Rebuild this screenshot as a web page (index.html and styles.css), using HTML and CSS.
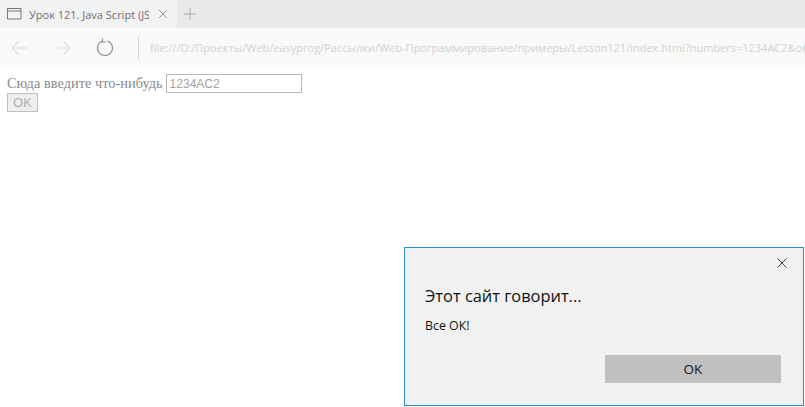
FILE: index.html
```html
<!DOCTYPE html>
<html lang="ru">
<head>
<meta charset="utf-8">
<title>Урок 121</title>
<link rel="stylesheet" href="styles.css">
</head>
<body>
<div class="tabbar">
  <div class="tab">
    <svg class="tab-icon" width="15" height="12" viewBox="0 0 15 12"><path d="M.5.5h13.500v10.500H.5zM.5 3h13.500" fill="none" stroke="#777"/></svg>
    <span class="tab-title">Урок 121. Java Script (JS</span>
    <svg class="tab-close" width="10" height="10" viewBox="0 0 10 10"><path d="M1 1l8 8M9 1l-8 8" stroke="#999" fill="none"/></svg>
  </div>
  <svg class="tab-new" width="12" height="12" viewBox="0 0 12 12"><path d="M6 0v12M0 6h12" stroke="#aaa" fill="none"/></svg>
</div>
<div class="toolbar">
  <svg class="nav nav-back" width="18" height="14" viewBox="0 0 18 14"><path d="M17 7H1M7.500 .5L1 7l6.500 6.500" stroke="#dedede" fill="none" stroke-width="1.200"/></svg>
  <svg class="nav nav-forward" width="18" height="14" viewBox="0 0 18 14"><path d="M1 7h16M10.500 .5L17 7l-6.500 6.500" stroke="#dedede" fill="none" stroke-width="1.200"/></svg>
  <svg class="nav nav-reload" width="18" height="19" viewBox="0 0 18 19"><path d="M11.500 3A7.500 7.500 0 1 1 6.500 3M6.500 .5V4H10" stroke="#909090" fill="none" stroke-width="1.100"/></svg>
  <div class="divider"></div>
  <div class="url">file:///D:/Проекты/Web/easyprog/Рассылки/Web-Программирование/примеры/Lesson121/index.html?numbers=1234AC2&amp;ok</div>
</div>
<main class="page">
  <div class="form-row">
    <label class="form-label" for="numbers">Сюда введите что-нибудь</label>
    <input class="form-input" id="numbers" value="1234AC2">
  </div>
  <button class="form-button">OK</button>
</main>
<section class="dialog">
  <svg class="dialog-close" width="10" height="10" viewBox="0 0 10 10"><path d="M.5.5l9 9M9.500 .5l-9 9" stroke="#444" fill="none"/></svg>
  <h1 class="dialog-title">Этот сайт говорит...</h1>
  <p class="dialog-text">Все ОК!</p>
  <div class="dialog-actions"><button class="dialog-button">OK</button></div>
</section>
</body>
</html>
```
FILE: styles.css
```css
* { box-sizing: border-box; }
html, body { margin: 0; height: 100%; }
body { position: relative; width: 805px; height: 407px; overflow: hidden; background: #fff; font-family: "Open Sans", "Noto Sans", sans-serif; }

.tabbar { height: 28px; background: #e9e9e9; display: flex; align-items: center; }
.tab { width: 177px; height: 28px; background: #f2f2f2; display: flex; align-items: center; padding-left: 7px; }
.tab-icon { flex: none; }
.tab-title { margin-left: 7px; width: 120px; overflow: hidden; white-space: nowrap; font-size: 11px; color: #707070; }
.tab-close { margin-left: 9px; flex: none; }
.tab-new { margin-left: 7px; }

.toolbar { height: 39px; background: #f9f9f9; display: flex; align-items: center; overflow: hidden; }
.nav { flex: none; }
.nav-back { margin-left: 11px; }
.nav-forward { margin-left: 24px; }
.nav-reload { margin-left: 25px; }
.divider { flex: none; width: 1px; height: 22px; margin-left: 24px; background: #d4d4d4; }
.url { flex: none; margin-left: 11px; white-space: nowrap; font-size: 11px; color: #d2d2d2; }

.page { padding: 7px 7px 0; font-family: "Liberation Serif", serif; font-size: 14.400px; color: #8a8a8a; }
.form-row { display: flex; align-items: center; height: 19px; }
.form-label { white-space: nowrap; }
.form-input { width: 136px; height: 19px; margin-left: 3px; padding: 0 3px; border: 1px solid #b8b8b8; background: #fff; color: #a2a2a2; font: 12px "Liberation Sans", sans-serif; }
.form-button { display: block; width: 31px; height: 19px; margin-top: 0; padding: 0; border: 1px solid #c0c0c0; background: #eee; color: #b0b0b0; font: 13px "Liberation Sans", sans-serif; }

.dialog { position: absolute; left: 404px; top: 247px; width: 400px; height: 159px; padding: 0 22px 0 20px; background: #f1f1f1; border: 1px solid #2a8ae0; color: #111; }
.dialog-close { position: absolute; right: 16px; top: 10px; }
.dialog-title { margin: 30px 0 0; font-size: 16.400px; font-weight: 400; line-height: 36px; }
.dialog-text { margin: 2px 0 0; font-size: 12.400px; line-height: 20px; }
.dialog-actions { display: flex; justify-content: flex-end; margin-top: 19px; }
.dialog-button { width: 176px; height: 28px; padding: 0; border: 0; background: #c0c0c0; color: #111; font: 13.500px "Open Sans", sans-serif; }
```
